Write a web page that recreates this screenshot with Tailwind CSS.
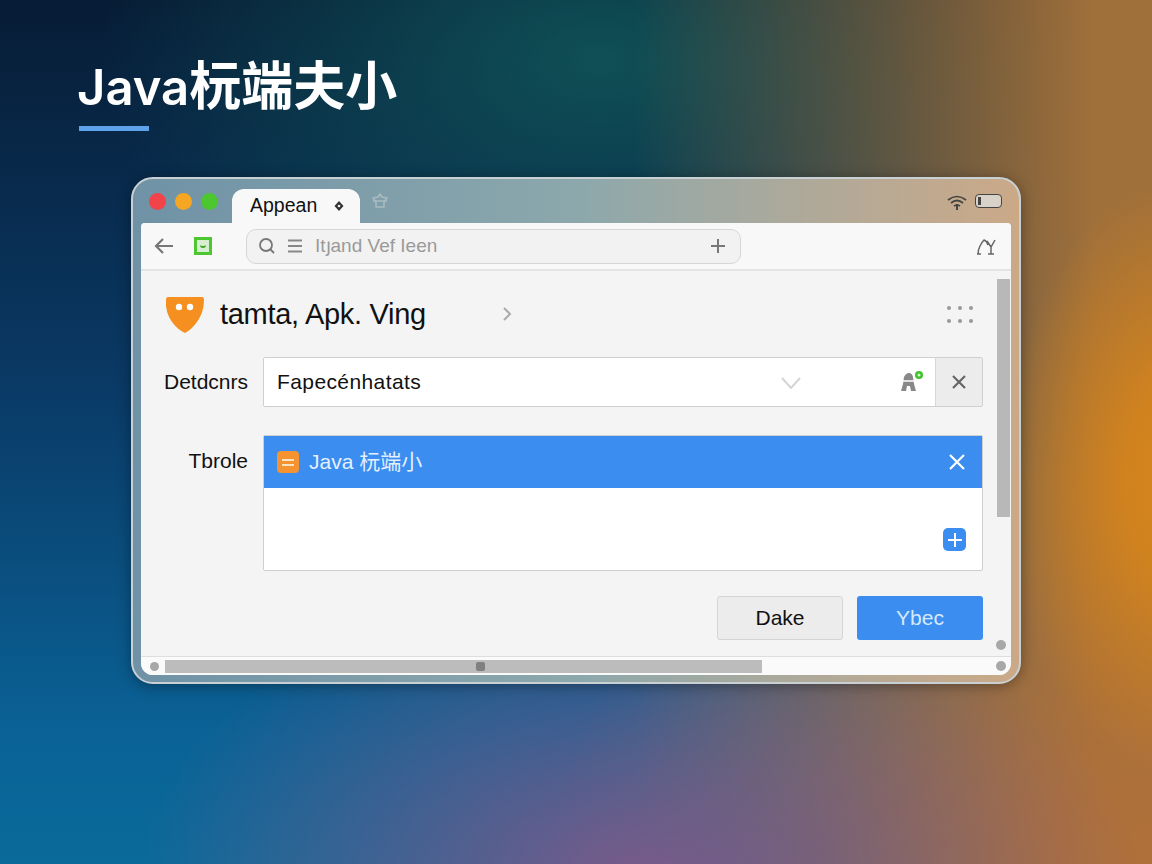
<!DOCTYPE html>
<html lang="en">
<head>
  <meta charset="UTF-8" />
  <title>Java</title>
  <script src="https://cdn.jsdelivr.net/npm/@tailwindcss/browser@4"></script>
</head>
<body class="m-0">
  <!-- Page backdrop -->
  <div class="w-[1152px] h-[864px] overflow-hidden font-['Inter','Noto_Sans_CJK_SC',sans-serif] bg-[radial-gradient(ellipse_190px_300px_at_1190px_480px,#d8871c_0%,#d0821f_35%,transparent_100%),radial-gradient(ellipse_500px_300px_at_640px_880px,#7a5a8a_0%,transparent_100%),radial-gradient(ellipse_600px_420px_at_1150px_860px,#b0703a_0%,transparent_100%),linear-gradient(90deg,transparent_55%,#a0703a_95%),radial-gradient(ellipse_500px_300px_at_600px_60px,#0f5056_0%,transparent_100%),linear-gradient(180deg,#071c35_0%,#0a3a66_45%,#0a6296_85%,#0a6a9a_100%)]">
    <div class="pl-[77px] pt-[56px]">
      <h1 class="text-[49px] leading-[62px] font-semibold text-white font-['Inter','Noto_Sans_CJK_SC',sans-serif]">Java<span class="text-[52px]">杬端夫小</span></h1>
      <div class="ml-[2px] mt-[7px] w-[70px] h-[5px] bg-[#5ea2ec]"></div>
    </div>

    <!-- App window -->
    <div class="ml-[131px] mt-[46px] w-[890px] h-[507px] rounded-[22px] border-2 border-[#c8d0d4] bg-gradient-to-r from-[#6f92a6] via-[#8ca8ac] to-[#cba987] shadow-[0_2px_14px_rgba(0,0,0,0.35)] flex flex-col px-[8px] pb-[7px]">
      <!-- Title bar -->
      <div class="h-[44px] shrink-0 flex items-end relative">
        <div class="absolute left-[8px] top-[14px] flex gap-[9px]">
          <span class="w-[17px] h-[17px] rounded-full bg-[#f0444a]"></span>
          <span class="w-[17px] h-[17px] rounded-full bg-[#f5a623]"></span>
          <span class="w-[17px] h-[17px] rounded-full bg-[#4cc72f]"></span>
        </div>
        <div class="ml-[91px] w-[128px] h-[34px] bg-[#f8f8f8] rounded-t-[12px] flex items-center pl-[18px] gap-[16px]">
          <span class="text-[19.5px] text-[#111] font-['Liberation_Sans',sans-serif]">Appean</span>
          <svg width="12" height="12" viewBox="0 0 12 12"><path d="M6 1l4.500 5L6 11 1.500 6z" fill="#333"/><circle cx="6" cy="6" r="1.300" fill="#eee"/></svg>
        </div>
        <svg class="absolute left-[230px] top-[14px]" width="18" height="16" viewBox="0 0 18 16" fill="none" stroke="#a9bcc0" stroke-width="1.500"><path d="M9 1l2 3 5 1-3 4v5H5V9L2 5l5-1z"/><path d="M2 8h14"/></svg>
        <svg class="absolute left-[806px] top-[14px]" width="20" height="18" viewBox="0 0 20 18" fill="none" stroke="#444" stroke-width="1.700"><path d="M1 7q9-7 18 0M4 10q6-5 12 0M7 13q3-2 6 0"/><path d="M10 11v6" stroke-width="2"/></svg>
        <div class="absolute left-[834px] top-[15px] w-[27px] h-[14px] rounded-[4px] border border-[#444] bg-[#d8d2c8] flex items-center pl-[2px]">
          <span class="w-[3px] h-[8px] bg-[#444]"></span>
        </div>
      </div>

      <!-- Browser body -->
      <div class="flex-1 min-h-0 bg-[#f4f4f4] rounded-t-[4px] rounded-b-[12px] flex flex-col overflow-hidden">
        <!-- Toolbar -->
        <div class="h-[48px] shrink-0 bg-[#f8f8f8] border-b-2 border-[#e4e4e4] flex items-center relative">
          <svg class="ml-[13px]" width="20" height="18" viewBox="0 0 20 18" fill="none" stroke="#777" stroke-width="2.200"><path d="M19 9H2M9 2L2 9l7 7"/></svg>
          <div class="ml-[20px] w-[18px] h-[18px] border-[3px] border-[#4cc72f] bg-[#d8eed0] flex items-center justify-center">
            <span class="w-[6px] h-[4px] border-b-2 border-[#3aa51f] rounded-b-full"></span>
          </div>
          <div class="ml-[34px] w-[495px] h-[35px] rounded-[10px] border-[1.5px] border-[#d6d6d6] bg-[#f2f2f2] flex items-center pl-[11px] pr-[14px]">
            <svg width="18" height="18" viewBox="0 0 18 18" fill="none" stroke="#777" stroke-width="1.800"><circle cx="8" cy="8" r="6"/><path d="M12.500 12.500L16 16"/></svg>
            <svg class="ml-[11px]" width="16" height="14" viewBox="0 0 16 14" fill="none" stroke="#888" stroke-width="1.800"><path d="M1 1.500h14M1 7h14M1 12.500h14"/></svg>
            <span class="ml-[12px] text-[19px] text-[#9a9a9a] font-['Liberation_Sans',sans-serif]">Itյand Vef Ieen</span>
            <svg class="ml-auto" width="16" height="16" viewBox="0 0 16 16" fill="none" stroke="#777" stroke-width="2"><path d="M8 1v14M1 8h14"/></svg>
          </div>
          <svg class="absolute left-[835px] top-[15px]" width="20" height="18" viewBox="0 0 20 18" fill="none" stroke="#666" stroke-width="1.500"><path d="M2 16q0-4 2-8t4-6q3 1 4 5M11 3l4 6 4-7M15 9v7M12 16h6M1 16h4"/></svg>
        </div>

        <!-- Content row with the vertical scrollbar -->
        <div class="flex-1 min-h-0 flex relative">
          <div class="flex-1 min-w-0">
            <div class="flex items-center h-[86px] pt-[1px] pl-[24px] relative">
              <svg width="40" height="38" viewBox="0 0 40 38"><path d="M3 1h34q2 0 2 3 0 12-7 22-6 8-12 11Q13 34 7 26 0 16 1 4q0-3 2-3z" fill="#f58f1f"/><circle cx="14" cy="11" r="3.200" fill="#fff"/><circle cx="25" cy="11" r="3.200" fill="#fff"/></svg>
              <span class="ml-[15px] text-[29px] text-[#111] font-['Liberation_Sans',sans-serif] tracking-[-0.3px]">tamta, Apk. Ving</span>
              <svg class="absolute left-[361px] top-[35px]" width="10" height="16" viewBox="0 0 10 16" fill="none" stroke="#aaa" stroke-width="2"><path d="M2 2l6 6-6 6"/></svg>
              <div class="absolute left-[806px] top-[35px] grid grid-cols-3 gap-x-[7px] gap-y-[9px]">
                <span class="w-[4px] h-[4px] rounded-full bg-[#999]"></span><span class="w-[4px] h-[4px] rounded-full bg-[#999]"></span><span class="w-[4px] h-[4px] rounded-full bg-[#999]"></span>
                <span class="w-[4px] h-[4px] rounded-full bg-[#999]"></span><span class="w-[4px] h-[4px] rounded-full bg-[#999]"></span><span class="w-[4px] h-[4px] rounded-full bg-[#999]"></span>
              </div>
            </div>

            <!-- First field -->
            <div class="flex items-center">
              <label class="w-[107px] text-right text-[21px] text-[#111] font-['Liberation_Sans',sans-serif]">Detdcnrs</label>
              <div class="ml-[15px] w-[720px] h-[50px] flex border border-[#cfcfcf] rounded-[2px] bg-white">
                <div class="flex-1 flex items-center pl-[13px] relative">
                  <span class="text-[21px] tracking-[0.4px] text-[#111] font-['Liberation_Sans',sans-serif]">Fapecénhatats</span>
                  <svg class="absolute left-[517px] top-[19px]" width="20" height="12" viewBox="0 0 20 12" fill="none" stroke="#d4d4d4" stroke-width="2"><path d="M1 1l9 10 9-10"/></svg>
                  <svg class="absolute left-[634px] top-[11px]" width="26" height="24" viewBox="0 0 26 24"><path d="M3 22l2-7 1-7q2-4 5-4t4 4l1 7 2 7h-5l-1-5h-3l-1 5z" fill="#888"/><path d="M5 12h11" stroke="#fff" stroke-width="1.500"/><circle cx="21" cy="6" r="4" fill="#3fc32a"/><circle cx="21" cy="6" r="1.500" fill="#d8f5d0"/></svg>
                </div>
                <div class="w-[47px] bg-[#ececec] border-l border-[#d8d8d8] flex items-center justify-center">
                  <svg width="16" height="16" viewBox="0 0 16 16" fill="none" stroke="#666" stroke-width="2.200"><path d="M2 2l12 12M14 2L2 14"/></svg>
                </div>
              </div>
            </div>

            <!-- Second field -->
            <div class="flex items-start mt-[28px]">
              <label class="w-[107px] h-[52px] flex items-center justify-end text-[21px] text-[#111] font-['Liberation_Sans',sans-serif]">Tbrole</label>
              <div class="ml-[15px] w-[720px] h-[136px] border border-[#cfcfcf] rounded-[2px] bg-white flex flex-col">
                <div class="h-[52px] bg-[#3b8ef0] flex items-center pl-[13px] pr-[16px]">
                  <span class="w-[22px] h-[22px] rounded-[4px] bg-[#f59331] flex flex-col items-center justify-center gap-[3px]">
                    <span class="w-[12px] h-[2px] bg-[#fbe3c4]"></span>
                    <span class="w-[12px] h-[2px] bg-[#fbe3c4]"></span>
                  </span>
                  <span class="ml-[10px] text-[21px] text-[#e4f0ff] font-['Liberation_Sans','Noto_Sans_CJK_SC',sans-serif]">Java 杬端小</span>
                  <svg class="ml-auto" width="18" height="18" viewBox="0 0 18 18" fill="none" stroke="#fff" stroke-width="2.200"><path d="M2 2l14 14M16 2L2 16"/></svg>
                </div>
                <div class="flex-1 flex items-end justify-end pr-[16px] pb-[19px]">
                  <span class="w-[23px] h-[23px] rounded-[5px] bg-[#3b8ef0] flex items-center justify-center">
                    <svg width="14" height="14" viewBox="0 0 14 14" fill="none" stroke="#fff" stroke-width="2"><path d="M7 0v14M0 7h14"/></svg>
                  </span>
                </div>
              </div>
            </div>

            <!-- Actions -->
            <div class="flex justify-end gap-[14px] mt-[25px] w-[842px]">
              <button class="w-[126px] h-[44px] rounded-[3px] border border-[#d4d4d4] bg-[#ececec] text-[21px] text-[#111] font-['Liberation_Sans',sans-serif]">Dake</button>
              <button class="w-[126px] h-[44px] rounded-[3px] bg-[#3b8ef0] text-[21px] text-[#d8e9ff] font-['Liberation_Sans',sans-serif]">Ybec</button>
            </div>
          </div>
          <div class="absolute left-[856px] top-[8px] w-[13px] h-[238px] bg-[#b8b8b8]"></div>
          <span class="absolute left-[855px] top-[369px] w-[10px] h-[10px] rounded-full bg-[#a8a8a8]"></span>
        </div>

        <!-- Horizontal scrollbar -->
        <div class="h-[19px] shrink-0 bg-[#fafafa] border-t border-[#dedede] flex items-center pl-[9px] relative">
          <span class="w-[9px] h-[9px] rounded-full bg-[#a8a8a8]"></span>
          <div class="ml-[6px] w-[597px] h-[13px] bg-[#bcbcbc] relative">
            <span class="absolute left-[311px] top-[2px] w-[9px] h-[9px] rounded-[2px] bg-[#808080]"></span>
          </div>
          <span class="absolute left-[855px] top-[4px] w-[10px] h-[10px] rounded-full bg-[#a8a8a8]"></span>
        </div>
      </div>
    </div>
  </div>
</body>
</html>
